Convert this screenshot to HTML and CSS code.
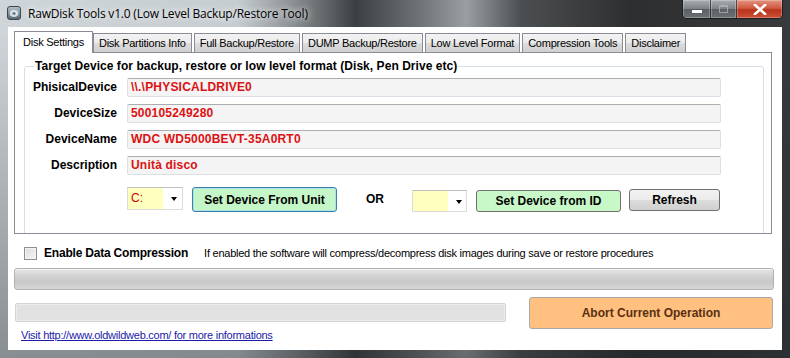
FILE: index.html
```html
<!DOCTYPE html>
<html lang="en">
<head>
<meta charset="UTF-8">
<meta name="viewport" content="width=device-width, initial-scale=1.0">
<title>RawDisk Tools v1.0</title>
<link rel="stylesheet" href="styles.css">
</head>
<body>

<div class="window">
    <div class="titlebar">
        <svg class="app-icon" width="14" height="14" viewBox="0 0 14 14">
            <defs>
                <linearGradient id="ic" x1="0" y1="0" x2="0" y2="1">
                    <stop offset="0" stop-color="#b8c4cc"/>
                    <stop offset="1" stop-color="#56646e"/>
                </linearGradient>
            </defs>
            <rect x="0.5" y="0.5" width="13" height="13" rx="2.5" fill="url(#ic)" stroke="#3c4650"/>
            <ellipse cx="7" cy="7.5" rx="4.2" ry="3.4" fill="#e4eef4" opacity="0.85"/>
            <ellipse cx="7" cy="7.5" rx="1.6" ry="1.2" fill="#5a7080"/>
        </svg>
        <span class="title">RawDisk Tools v1.0 (Low Level Backup/Restore Tool)</span>
        <div class="caption">
            <div class="cap-btn cap-min"><span class="min-glyph"></span></div>
            <div class="cap-btn cap-max"><span class="max-glyph"></span></div>
            <div class="cap-btn cap-close">
                <svg width="14" height="11" viewBox="0 0 14 11">
                    <path d="M2 1 L12 10 M12 1 L2 10" stroke="#fff" stroke-width="2.6" stroke-linecap="square"/>
                </svg>
            </div>
        </div>
    </div>

    <div class="client">
        <div class="tabs">
            <div class="tab active">Disk Settings</div>
            <div class="tab">Disk Partitions Info</div>
            <div class="tab">Full Backup/Restore</div>
            <div class="tab">DUMP Backup/Restore</div>
            <div class="tab">Low Level Format</div>
            <div class="tab">Compression Tools</div>
            <div class="tab">Disclaimer</div>
        </div>

        <div class="tab-page">
            <fieldset class="group">
                <legend>Target Device for backup, restore or low level format (Disk, Pen Drive etc)</legend>

                <div class="fields">
                    <label>PhisicalDevice</label>
                    <div class="field">\\.\PHYSICALDRIVE0</div>
                    <label>DeviceSize</label>
                    <div class="field">500105249280</div>
                    <label>DeviceName</label>
                    <div class="field">WDC WD5000BEVT-35A0RT0</div>
                    <label>Description</label>
                    <div class="field">Unità disco</div>
                </div>

                <div class="unit-row">
                    <div class="combo">
                        <span class="combo-text">C:</span>
                        <span class="combo-arrow"></span>
                    </div>
                    <button class="btn btn-green btn-default">Set Device From Unit</button>
                    <span class="or">OR</span>
                    <div class="combo combo-low">
                        <span class="combo-text"></span>
                        <span class="combo-arrow"></span>
                    </div>
                    <button class="btn btn-green btn-low">Set Device from ID</button>
                    <button class="btn btn-std">Refresh</button>
                </div>
            </fieldset>
        </div>

        <div class="compress-row">
            <span class="checkbox"></span>
            <span class="check-label">Enable Data Compression</span>
            <span class="check-hint">If enabled the software will compress/decompress disk images during save or restore procedures</span>
        </div>

        <div class="progress"></div>

        <div class="bottom-row">
            <div class="status-bar"></div>
            <button class="btn btn-abort">Abort Current Operation</button>
        </div>

        <a class="site-link" href="#">Visit http://www.oldwildweb.com/ for more informations</a>
    </div>
</div>

</body>
</html>
```

FILE: styles.css
```css
body {
    margin: 0;
    width: 790px;
    height: 358px;
    overflow: hidden;
    font-family: 'Liberation Sans', Arial, sans-serif;
    font-size: 11px;
}

.window {
    width: 790px;
    height: 358px;
    display: flex;
    flex-direction: column;
    background:
        linear-gradient(180deg, rgba(0,0,0,0) 8%, rgba(30,34,38,0.4) 100%),
        linear-gradient(90deg, #cfd5d8 0%, #c6cdd1 30%, #8c9194 37%, #3c3f41 45%, #6e7274 53%, #9a9ea0 59%, #4c4f51 66%, #2c2e2f 80%, #383a3b 100%);
}

/* title bar */

.titlebar {
    height: 27px;
    display: flex;
    align-items: flex-start;
    padding-left: 7px;
}

.app-icon {
    margin-top: 6px;
}

.title {
    margin-left: 7px;
    margin-top: 5px;
    font-family: 'Open Sans', sans-serif;
    font-size: 12px;
    letter-spacing: -0.2px;
    color: #000;
    text-shadow: 0 0 6px rgba(255,255,255,0.9), 0 0 10px rgba(255,255,255,0.6);
}

.caption {
    margin-left: auto;
    margin-right: 7px;
    display: flex;
    height: 18px;
    border: 1px solid rgba(20,24,28,0.75);
    border-top: none;
    border-radius: 0 0 5px 5px;
    overflow: hidden;
}

.cap-btn {
    display: flex;
    align-items: center;
    justify-content: center;
    box-shadow: inset 0 0 0 1px rgba(255,255,255,0.25);
}

.cap-min, .cap-max {
    width: 27px;
    background: linear-gradient(180deg, #a8aeb2 0%, #7c8286 48%, #5a6064 52%, #6a7074 100%);
    border-right: 1px solid rgba(20,24,28,0.6);
}

.cap-max {
    width: 25px;
}

.min-glyph {
    width: 10px;
    height: 3px;
    margin-top: 5px;
    background: #fff;
    box-shadow: 0 0 1px #333;
}

.max-glyph {
    width: 7px;
    height: 5px;
    border: 1px solid #b8bcc0;
    border-top-width: 2px;
    opacity: 0.7;
}

.cap-close {
    width: 45px;
    background: linear-gradient(180deg, #e49482 0%, #d05a40 45%, #b8341c 55%, #cc5034 100%);
}

/* client area */

.client {
    margin: 0 8px;
    height: 323px;
    background: #fff;
    display: flex;
    flex-direction: column;
    padding-top: 4px;
    box-sizing: border-box;
}

.tabs {
    display: flex;
    align-items: flex-end;
    margin-left: 6px;
    height: 21px;
    position: relative;
    z-index: 1;
}

.tab {
    height: 19px;
    box-sizing: border-box;
    padding: 0 5px;
    margin-right: 2px;
    border: 1px solid #898c95;
    border-bottom: none;
    background: linear-gradient(180deg, #f3f3f3 0%, #ebebeb 50%, #dddddd 51%, #cfcfcf 100%);
    line-height: 18px;
    letter-spacing: -0.25px;
    color: #000;
    white-space: nowrap;
}

.tab.active {
    height: 22px;
    margin-bottom: -1px;
    margin-right: 0;
    padding: 0 8px;
    background: #fff;
    line-height: 20px;
}

.tab-page {
    margin-left: 6px;
    width: 758px;
    height: 182px;
    box-sizing: border-box;
    border: 1px solid #898c95;
    padding: 6px 0 0 9px;
    overflow: hidden;
}

.group {
    margin: 0;
    padding: 0;
    width: 740px;
    min-height: 190px;
    box-sizing: border-box;
    border: 1px solid #d5dfe5;
    border-radius: 3px;
}

.group legend {
    margin-left: 9px;
    padding: 0 1px;
    font-size: 12px;
    font-weight: bold;
    line-height: 14px;
    letter-spacing: 0.05px;
}

.fields {
    display: grid;
    grid-template-columns: 92px 594px;
    grid-auto-rows: 19px;
    column-gap: 10px;
    row-gap: 7px;
    margin-top: 5px;
}

.fields label {
    text-align: right;
    font-size: 12px;
    font-weight: bold;
    line-height: 19px;
}

.field {
    box-sizing: border-box;
    background: #f4f4f4;
    border: 1px solid #dbdfe6;
    border-top-color: #abadb3;
    border-radius: 2px;
    padding-left: 3px;
    color: #dd1111;
    font-size: 12px;
    font-weight: bold;
    line-height: 17px;
    letter-spacing: 0.2px;
}

.unit-row {
    display: flex;
    align-items: flex-start;
    margin: 12px 0 0 102px;
}

.combo {
    width: 56px;
    height: 23px;
    box-sizing: border-box;
    border: 1px solid #dcdcdc;
    border-top-color: #c0c0c0;
    display: flex;
    background: #fff;
}

.combo-low {
    width: 55px;
    height: 22px;
    margin-top: 3px;
}

.combo-text {
    width: 35px;
    background: #ffffc0;
    color: #cc0000;
    font-size: 12px;
    padding-left: 3px;
    box-sizing: border-box;
    line-height: 21px;
}

.combo-arrow {
    flex: 1;
    position: relative;
}

.combo-arrow::after {
    content: "";
    position: absolute;
    left: 8px;
    top: 9px;
    border-left: 3.5px solid transparent;
    border-right: 3.5px solid transparent;
    border-top: 4px solid #000;
}

.btn {
    box-sizing: border-box;
    font-family: 'Liberation Sans', Arial, sans-serif;
    font-size: 12px;
    font-weight: bold;
    color: #000;
    border: 1px solid #707070;
    border-radius: 3px;
    padding: 0;
    margin: 0;
}

.btn-green {
    width: 145px;
    height: 25px;
    margin-left: 9px;
    background: #c4f6c8;
}

.btn-default {
    border-color: #3c7fb1;
    box-shadow: inset 0 0 0 1px rgba(160,210,240,0.6);
}

.btn-low {
    height: 22px;
    margin-top: 3px;
    background: #c8f8c8;
}

.or {
    margin: 5px 28px 0 29px;
    font-size: 12px;
    font-weight: bold;
}

.btn-std {
    width: 91px;
    height: 22px;
    margin: 2px 0 0 8px;
    background: linear-gradient(180deg, #f2f2f2 0%, #ebebeb 50%, #dddddd 51%, #cfcfcf 100%);
}

/* bottom area */

.compress-row {
    display: flex;
    align-items: center;
    height: 14px;
    margin: 12px 0 0 16px;
}

.checkbox {
    width: 13px;
    height: 13px;
    box-sizing: border-box;
    border: 1px solid #8f8f8f;
    background: linear-gradient(135deg, #dcdcdc 0%, #f6f6f6 100%);
    box-shadow: inset 0 0 0 1px #f4f4f4;
}

.check-label {
    margin-left: 7px;
    font-size: 12px;
    font-weight: bold;
    letter-spacing: -0.2px;
}

.check-hint {
    margin-left: 16px;
    letter-spacing: -0.25px;
}

.progress {
    margin: 8px 0 0 6px;
    width: 760px;
    height: 22px;
    box-sizing: border-box;
    border: 1px solid #b2b2b2;
    border-radius: 3px;
    background: linear-gradient(180deg, #e6e6e6 0%, #d2d2d2 35%, #c8c8c8 65%, #d6d6d6 100%);
    box-shadow: inset 0 1px 0 #f4f4f4;
}

.bottom-row {
    display: flex;
    align-items: flex-start;
    margin: 7px 0 0 7px;
}

.status-bar {
    margin-top: 6px;
    width: 491px;
    height: 19px;
    box-sizing: border-box;
    border: 1px solid #d4d4d4;
    border-radius: 2px;
    background: #e2e2e2;
    box-shadow: inset 0 0 0 1px #ececec;
}

.btn-abort {
    margin-left: 23px;
    width: 244px;
    height: 32px;
    background: #ffc080;
    border-color: #a8a8a8;
    color: #5a3010;
}

.site-link {
    margin: 0 0 0 13px;
    color: #1c1ca8;
    letter-spacing: -0.25px;
    align-self: flex-start;
}
```
